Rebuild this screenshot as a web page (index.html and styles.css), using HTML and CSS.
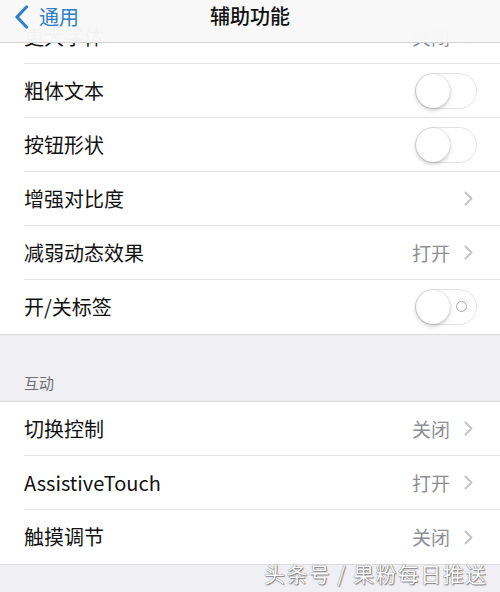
FILE: index.html
```html
<!DOCTYPE html>
<html lang="zh-CN">

<head>
    <meta charset="UTF-8">
    <meta name="viewport" content="width=device-width, initial-scale=1.0">
    <title>辅助功能</title>
    <link rel="stylesheet" href="styles.css">
</head>

<body>
    <div class="screen">
        <!-- Navigation bar, sits over the scrolled list -->
        <div class="navbar">
            <a class="back" href="#">
                <svg width="15" height="24" viewBox="0 0 15 24">
                    <path d="M12.5 2 L3 12 L12.5 22" fill="none" stroke="currentColor" stroke-width="3.2" stroke-linecap="round" stroke-linejoin="round"/>
                </svg>
                <span>通用</span>
            </a>
            <div class="title">辅助功能</div>
            <div></div>
        </div>

        <div class="group group-first">
            <div class="row">
                <div class="cell">
                    <span class="label">更大字体</span>
                    <span class="detail">关闭</span>
                    <svg class="chevron" width="9" height="15" viewBox="0 0 9 15"><path d="M1.5 1.5 L7.5 7.5 L1.5 13.5" /></svg>
                </div>
            </div>
            <div class="row">
                <div class="cell">
                    <span class="label">粗体文本</span>
                    <span class="switch"><span class="knob"></span></span>
                </div>
            </div>
            <div class="row">
                <div class="cell">
                    <span class="label">按钮形状</span>
                    <span class="switch"><span class="knob"></span></span>
                </div>
            </div>
            <div class="row">
                <div class="cell">
                    <span class="label">增强对比度</span>
                    <svg class="chevron" width="9" height="15" viewBox="0 0 9 15"><path d="M1.5 1.5 L7.5 7.5 L1.5 13.5" /></svg>
                </div>
            </div>
            <div class="row">
                <div class="cell">
                    <span class="label">减弱动态效果</span>
                    <span class="detail">打开</span>
                    <svg class="chevron" width="9" height="15" viewBox="0 0 9 15"><path d="M1.5 1.5 L7.5 7.5 L1.5 13.5" /></svg>
                </div>
            </div>
            <div class="row">
                <div class="cell">
                    <span class="label">开/关标签</span>
                    <span class="switch switch-labels"><span class="knob"></span><span class="off-mark"></span></span>
                </div>
            </div>
        </div>

        <div class="section-header">互动</div>

        <div class="group">
            <div class="row">
                <div class="cell">
                    <span class="label">切换控制</span>
                    <span class="detail">关闭</span>
                    <svg class="chevron" width="9" height="15" viewBox="0 0 9 15"><path d="M1.5 1.5 L7.5 7.5 L1.5 13.5" /></svg>
                </div>
            </div>
            <div class="row">
                <div class="cell">
                    <span class="label">AssistiveTouch</span>
                    <span class="detail">打开</span>
                    <svg class="chevron" width="9" height="15" viewBox="0 0 9 15"><path d="M1.5 1.5 L7.5 7.5 L1.5 13.5" /></svg>
                </div>
            </div>
            <div class="row">
                <div class="cell">
                    <span class="label">触摸调节</span>
                    <span class="detail">关闭</span>
                    <svg class="chevron" width="9" height="15" viewBox="0 0 9 15"><path d="M1.5 1.5 L7.5 7.5 L1.5 13.5" /></svg>
                </div>
            </div>
        </div>

        <div class="watermark">头条号 / 果粉每日推送</div>
    </div>
</body>

</html>
```

FILE: styles.css
```css
body {
    margin: 0;
    padding: 0;
    font-family: "Noto Sans CJK SC", "Noto Sans", sans-serif;
    background-color: #efeff4;
}

.screen {
    position: relative;
    width: 500px;
    height: 592px;
    overflow: hidden;
    background-color: #efeff4;
}

/* top bar */
.navbar {
    position: absolute;
    top: 0;
    left: 0;
    right: 0;
    height: 42px;
    display: grid;
    grid-template-columns: 1fr auto 1fr;
    align-items: start;
    background-color: rgba(248, 248, 248, 0.98);
    border-bottom: 1px solid #d4d4d6;
    z-index: 2;
}

.back {
    justify-self: start;
    display: flex;
    align-items: center;
    gap: 10px;
    margin: 5px 0 0 14px;
    color: #2f80c8;
    text-decoration: none;
    font-size: 20px;
    line-height: 22px;
}

.title {
    font-size: 20px;
    line-height: 32px;
    font-weight: 500;
    color: #111;
}

/* list groups */
.group {
    background-color: #fff;
    border-top: 1px solid #dcdcdf;
    border-bottom: 1px solid #dcdcdf;
}

.group-first {
    margin-top: 9px;
}

.row {
    padding-left: 24px;
}

.cell {
    display: flex;
    align-items: center;
    height: 53px;
    padding-right: 23px;
    border-bottom: 1px solid #e4e4e7;
}

.row:last-child .cell {
    height: 54px;
    border-bottom: none;
}

.label {
    flex: 1;
    font-size: 20px;
    line-height: 22px;
    color: #111;
}

.detail {
    font-size: 19px;
    line-height: 22px;
    color: #8e8e93;
    margin-right: 14px;
}

.chevron {
    margin-right: 4px;
}

.chevron path {
    fill: none;
    stroke: #c4c4c8;
    stroke-width: 2;
    stroke-linecap: round;
    stroke-linejoin: round;
}

/* switches, all in off state */
.switch {
    position: relative;
    width: 60px;
    height: 34px;
    border: 1.5px solid #e3e3e6;
    border-radius: 18px;
    background-color: #fff;
}

.knob {
    position: absolute;
    left: 0;
    top: 0;
    width: 34px;
    height: 34px;
    border-radius: 50%;
    background-color: #fff;
    box-shadow: 0 2px 4px rgba(0, 0, 0, 0.22), 0 0 1px rgba(0, 0, 0, 0.25);
}

.off-mark {
    position: absolute;
    right: 9px;
    top: 11px;
    width: 9px;
    height: 9px;
    border: 1.5px solid #a8a8ad;
    border-radius: 50%;
}

.section-header {
    height: 66px;
    box-sizing: border-box;
    padding: 0 0 8px 24px;
    display: flex;
    align-items: flex-end;
    font-size: 15px;
    color: #6d6d72;
}

.watermark {
    position: absolute;
    left: 264px;
    top: 558px;
    font-size: 21px;
    letter-spacing: 1.4px;
    color: #fff;
    text-shadow: 0 0 1px rgba(0, 0, 0, 0.7), 1px 1px 1px rgba(0, 0, 0, 0.4);
}
```
